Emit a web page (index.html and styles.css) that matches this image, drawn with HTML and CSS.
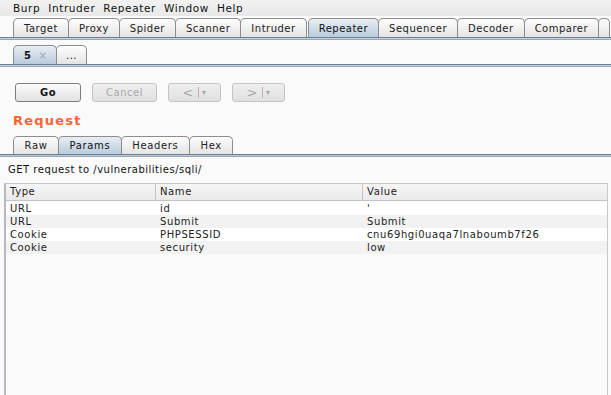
FILE: index.html
```html
<!doctype html>
<html lang="en">
  <head>
    <meta charset="UTF-8" />
    <title>Burp Suite - Repeater</title>
    <link rel="stylesheet" href="styles.css">
  </head>
  <body>
    <!-- Menu -->
    <div class="menubar">
      <span>Burp</span>
      <span>Intruder</span>
      <span>Repeater</span>
      <span>Window</span>
      <span>Help</span>
    </div>

    <!-- Main tools tabs -->
    <div class="tabs main-tabs">
      <div class="tab">Target</div>
      <div class="tab">Proxy</div>
      <div class="tab">Spider</div>
      <div class="tab">Scanner</div>
      <div class="tab">Intruder</div>
      <div class="tab active">Repeater</div>
      <div class="tab">Sequencer</div>
      <div class="tab">Decoder</div>
      <div class="tab">Comparer</div>
      <div class="tab cut"></div>
    </div>
    <div class="tab-line"></div>

    <!-- Repeater sub tabs -->
    <div class="tabs sub-tabs">
      <div class="tab active">5 <span class="close">×</span></div>
      <div class="tab">...</div>
    </div>
    <div class="tab-line"></div>

    <!-- Buttons -->
    <div class="toolbar">
      <button class="btn">Go</button>
      <button class="btn disabled">Cancel</button>
      <button class="btn disabled nav">&lt; <span class="sep"></span><span class="arrow">▾</span></button>
      <button class="btn disabled nav">&gt; <span class="sep"></span><span class="arrow">▾</span></button>
    </div>

    <h2 class="title">Request</h2>

    <div class="tabs req-tabs">
      <div class="tab">Raw</div>
      <div class="tab active">Params</div>
      <div class="tab">Headers</div>
      <div class="tab">Hex</div>
    </div>
    <div class="tab-line thin"></div>

    <div class="req-info">GET request to /vulnerabilities/sqli/</div>

    <!-- Params table -->
    <div class="table">
      <div class="row head">
        <div class="cell c-type">Type</div>
        <div class="cell c-name">Name</div>
        <div class="cell c-value">Value</div>
      </div>
      <div class="row">
        <div class="cell c-type">URL</div>
        <div class="cell c-name">id</div>
        <div class="cell c-value">'</div>
      </div>
      <div class="row alt">
        <div class="cell c-type">URL</div>
        <div class="cell c-name">Submit</div>
        <div class="cell c-value">Submit</div>
      </div>
      <div class="row">
        <div class="cell c-type">Cookie</div>
        <div class="cell c-name">PHPSESSID</div>
        <div class="cell c-value">cnu69hgi0uaqa7lnaboumb7f26</div>
      </div>
      <div class="row alt">
        <div class="cell c-type">Cookie</div>
        <div class="cell c-name">security</div>
        <div class="cell c-value">low</div>
      </div>
      <div class="table-empty"></div>
    </div>
  </body>
</html>
```

FILE: styles.css
```css
* {
  margin: 0;
  padding: 0;
  box-sizing: border-box;
}

body {
  width: 611px;
  height: 395px;
  overflow: hidden;
  background: #fafafa;
  font-family: "DejaVu Sans", Verdana, sans-serif;
  font-size: 10px;
  color: #222;
}

/* Menu */
.menubar {
  height: 16px;
  padding-left: 13px;
  display: flex;
  gap: 8px;
  align-items: center;
  background: linear-gradient(#f2f2f2, #e8e8e8);
  font-size: 10.5px;
  letter-spacing: 0.6px;
  color: #111;
}

/* Tabs */
.tabs {
  display: flex;
  padding-left: 13px;
  align-items: flex-end;
}

.tab {
  height: 19px;
  padding: 0 10px;
  display: flex;
  align-items: center;
  border: 1px solid #8d8d8d;
  border-bottom: none;
  border-radius: 5px 5px 0 0;
  background: linear-gradient(#fdfdfd, #e4e4e4);
  color: #222;
  letter-spacing: 0.5px;
  margin-right: -1px;
  white-space: nowrap;
}

.tab.active {
  background: linear-gradient(#e8eef4, #b9cbdc);
  color: #111;
}

.main-tabs {
  margin-top: 2px;
}

.main-tabs .tab:nth-child(6) {
  margin-left: 2px;
}

.main-tabs .tab.cut {
  width: 12px;
  padding: 0;
}

.tab-line {
  height: 3px;
  background: #c1d2e1;
  border-top: 1px solid #6f7f8f;
  border-bottom: 1px solid #9aa6b0;
}

.tab-line.thin {
  height: 3px;
  background: #b8c8d8;
}

.sub-tabs {
  margin-top: 5px;
}

.sub-tabs .tab {
  height: 19px;
}

.sub-tabs .tab.active {
  width: 44px;
  font-weight: bold;
}

.close {
  font-weight: normal;
  color: #9aa;
  margin-left: 7px;
}

.sub-tabs .tab:last-child {
  width: 31px;
  justify-content: center;
}

/* Buttons */
.toolbar {
  display: flex;
  gap: 11px;
  padding: 16px 0 0 15px;
}

.btn {
  height: 19px;
  width: 66px;
  border: 1px solid #7d7d7d;
  border-radius: 3px;
  background: linear-gradient(#fbfbfb, #e2e2e2);
  font-family: inherit;
  font-size: 10px;
  font-weight: bold;
  letter-spacing: 0.5px;
  color: #111;
}

.btn.disabled {
  width: 65px;
  border-color: #c4c4c4;
  background: linear-gradient(#eeeeee, #e0e0e0);
  color: #a8a8a8;
  font-weight: normal;
}

.btn.nav {
  width: 53px;
  font-size: 13px;
  display: flex;
  align-items: center;
  justify-content: center;
}

.sep {
  display: inline-block;
  width: 1px;
  height: 11px;
  background: #b5b5b5;
  margin: 0 3px 0 4px;
}

.arrow {
  font-size: 8px;
}

.title {
  margin: 11px 0 0 13px;
  font-size: 13px;
  font-weight: bold;
  color: #fa6432;
  letter-spacing: 1.2px;
  line-height: 16px;
}

.req-tabs {
  margin-top: 7px;
}

.req-tabs .tab {
  height: 18px;
  padding: 0 10.5px;
  letter-spacing: 0.65px;
}

.req-info {
  padding: 7px 0 0 8px;
  height: 26px;
  letter-spacing: 0.5px;
  color: #111;
}

/* Table */
.table {
  margin: 0 3px 0 4px;
  border-left: 2px solid #b8b8c0;
  border-right: 1px solid #c8c8c8;
  border-top: 1px solid #c8c8c8;
  background: #fafafa;
}

.row {
  display: flex;
  height: 13px;
  line-height: 13px;
  background: #ffffff;
  letter-spacing: 0.6px;
}

.row.alt {
  background: #f2f2f2;
}

.row.head {
  height: 17px;
  line-height: 16px;
  background: linear-gradient(#f6f6f6, #e9e9e9);
  border-bottom: 1px solid #c4c4c4;
  margin-bottom: 1px;
}

.cell {
  padding-left: 4px;
}

.c-type {
  width: 150px;
}

.c-name {
  width: 207px;
}

.row.head .cell {
  border-right: 1px solid #c4c4c4;
}

.row.head .c-value {
  border-right: none;
}

.table-empty {
  height: 150px;
}
```
